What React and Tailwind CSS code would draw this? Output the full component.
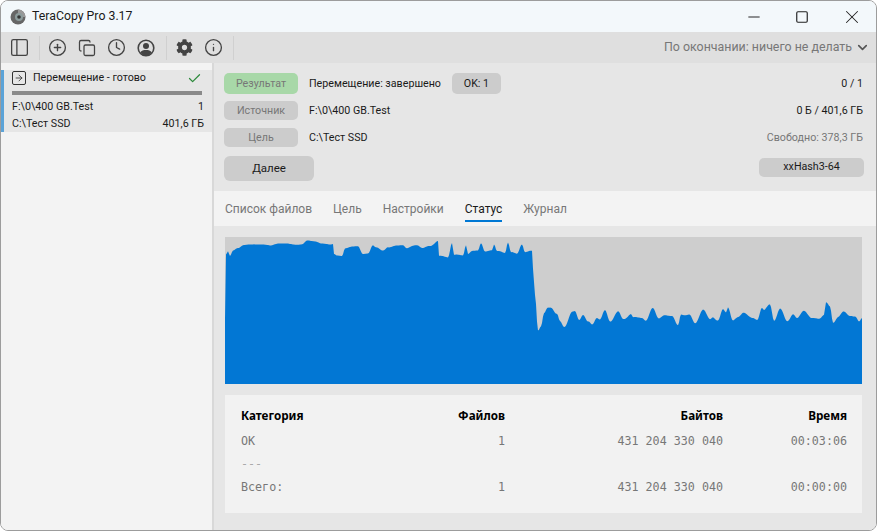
import { CirclePlus, Copy, Clock, Info, Check, ChevronDown, PanelLeft, Minus, Square, X, ArrowRight } from "lucide-react";
import { FaCog } from "react-icons/fa";

// traced from the speed graph
const tracePoints = [
  [225,319],[226,254],[228,251],[230,256],[233,251],[238,248],[243,245],[249,245],[255,244],[263,245],[270,245],[278,244],[285,243],[295,245],[302,244],[307,241],[315,241],[322,244],[333,244],[334,254],[337,256],[342,256],[345,248],[352,247],[358,246],[363,254],[368,254],[373,245],[376,247],[383,251],[388,247],[396,246],[403,245],[407,248],[417,245],[423,248],[430,246],[438,241],[439,256],[448,257],[452,243],[454,255],[463,255],[466,245],[468,254],[473,251],[478,250],[481,243],[485,252],[492,250],[494,244],[497,251],[505,253],[508,242],[511,252],[517,254],[522,244],[525,252],[532,251],[533,269],[535,295],[538,330],[541,326],[544,314],[548,308],[551,307],[557,314],[560,322],[564,327],[572,312],[575,312],[579,320],[583,314],[588,322],[592,325],[597,317],[600,319],[605,311],[610,321],[618,312],[623,319],[631,314],[633,318],[642,317],[646,321],[653,308],[659,318],[665,316],[672,315],[678,326],[681,315],[689,314],[695,324],[703,309],[710,320],[713,317],[718,320],[723,310],[726,313],[728,307],[733,320],[738,318],[744,312],[753,319],[757,320],[762,307],[764,310],[770,305],[774,320],[780,309],[787,321],[793,314],[797,319],[804,310],[812,319],[819,318],[824,315],[826,303],[830,307],[833,322],[838,317],[844,312],[850,315],[855,317],[859,322],[862,318],
];

// rounds the peaks and adds the small per-sample wobble of the real graph
const buildChart = () => {
  const out = ["225,384"];
  tracePoints.forEach(([x, y], i) => {
    const next = tracePoints[i + 1];
    if (!next) {
      out.push(`${x},${y}`);
      return;
    }
    const steps = Math.max(1, next[0] - x);
    for (let s = 0; s < steps; s++) {
      const t = (1 - Math.cos((Math.PI * s) / steps)) / 2;
      const px = x + s;
      const wobble = px > 538 ? Math.sin(px * 12.9898) * 0.9 : Math.sin(px * 12.9898) * 0.4;
      out.push(`${px},${(y + (next[1] - y) * t + wobble).toFixed(1)}`);
    }
  });
  out.push("862,384");
  return out.join(" ");
};
const chartPoints = buildChart();

const mono = "font-['DejaVu_Sans_Mono',monospace] text-[11.7px] text-[#777]";
const cols = "grid grid-cols-[132px_132px_218px_124px] items-center";

const Tag = ({ green, children }) => (
  <div
    className={`w-[74px] pt-px rounded-[5px] flex items-center justify-center text-[#777] ${
      green ? "bg-[#a8d8a8] h-[21px]" : "bg-[#cccccc] h-[19px]"
    }`}
  >
    {children}
  </div>
);

const UserIcon = () => (
  <svg width="18" height="18" viewBox="0 0 18 18">
    <circle cx="9" cy="9" r="7.8" fill="none" stroke="#444" strokeWidth="1.6" />
    <circle cx="9" cy="7" r="3" fill="#444" />
    <path d="M3.2 13.6C4.5 11.6 6.5 11 9 11s4.5.6 5.8 2.6A7.8 7.8 0 0 1 9 16.8a7.8 7.8 0 0 1-5.8-3.2Z" fill="#444" />
  </svg>
);

const AppIcon = () => (
  <svg width="16" height="16" viewBox="0 0 16 16">
    <circle cx="8" cy="8" r="7.5" fill="#666" />
    <path d="M8 .5A7.5 7.5 0 0 1 15.5 8H8Z" fill="#999" />
    <circle cx="9" cy="8" r="4" fill="#8c9c9c" />
    <circle cx="9" cy="8" r="1.8" fill="#333" />
  </svg>
);

const Sep = () => <div className="w-px h-6 bg-[#d0d0d0]" />;

const Row = ({ cat, files, bytes, time, catClass }) => (
  <div className={`${cols} h-[23px]`}>
    <div className={catClass || mono}>{cat}</div>
    <div className={`${mono} text-right`}>{files}</div>
    <div className={`${mono} text-right`}>{bytes}</div>
    <div className={`${mono} text-right`}>{time}</div>
  </div>
);

export default function App() {
  return (
    <div className="w-[877px] h-[532px] bg-white font-['Roboto',sans-serif] text-[10.7px] text-[#1a1a1a] overflow-hidden">
      <div className="h-[531px] rounded-[8px] border border-[#9c9c9c] overflow-hidden flex flex-col">
        {/* title bar */}
        <div className="h-[31px] shrink-0 bg-[#f3f8fb] flex items-center pl-[9px] pr-[13px]">
          <AppIcon />
          <span className="ml-[6px] text-[12.3px]">TeraCopy Pro 3.17</span>
          <div className="ml-auto flex items-center gap-[32px]">
            <Minus size={18} strokeWidth={1.3} color="#222" />
            <Square size={14} strokeWidth={2} color="#222" />
            <X size={22} strokeWidth={1.1} color="#222" />
          </div>
        </div>

        {/* toolbar */}
        <div className="h-[31px] shrink-0 bg-[#dfdfdf] flex items-center pl-[8px] pr-[6px] text-[#444]">
          <PanelLeft size={21} strokeWidth={1.5} color="#444" />
          <div className="ml-[9px] mr-[8px]"><Sep /></div>
          <div className="flex items-center gap-[11px]">
            <CirclePlus size={19} strokeWidth={1.7} color="#444" />
            <Copy size={18} strokeWidth={1.7} color="#444" />
            <Clock size={19} strokeWidth={1.7} color="#444" />
            <UserIcon />
          </div>
          <div className="ml-[11px] mr-[9px]"><Sep /></div>
          <div className="flex items-center gap-[11px]">
            <FaCog size={17} color="#444" />
            <Info size={19} strokeWidth={1.7} color="#444" />
          </div>
          <div className="ml-[10px]"><Sep /></div>
          <div className="ml-auto flex items-center gap-[3px] text-[12.4px] text-[#777]">
            По окончании: ничего не делать
            <ChevronDown size={15} strokeWidth={2.6} color="#555" />
          </div>
        </div>

        <div className="flex-1 flex min-h-0">
          {/* queue */}
          <div className="w-[211px] shrink-0 bg-[#f3f3f3] pt-[6px]">
            <div className="h-[62px] bg-[#e6e6e6] border-l-[3px] border-[#5ba3d8] pl-[8px] pr-[8px] relative">
              <div className="flex items-center h-[16px] mt-[1px]">
                <div className="w-[14px] h-[14px] rounded-[2px] border border-[#333] flex items-center justify-center">
                  <ArrowRight size={10} strokeWidth={2} color="#333" />
                </div>
                <span className="ml-[7px]">Перемещение - готово</span>
                <Check size={15} strokeWidth={2} color="#2e8b3d" className="ml-auto mr-[2px]" />
              </div>
              <div className="h-[4px] bg-[#8a8a8a] mt-[5px] mr-[2px]" />
              <div className="flex justify-between mt-[5px] h-[15px] items-center"><span>F:\0\400 GB.Test</span><span>1</span></div>
              <div className="flex justify-between mt-[2px] h-[15px] items-center"><span>C:\Тест SSD</span><span>401,6 ГБ</span></div>
            </div>
          </div>

          <div className="flex-1 min-w-0 flex flex-col bg-[#e6e6e6] border-l-2 border-[#d8d8d8]">
            {/* job info */}
            <div className="h-[128px] shrink-0 pl-[10px] pr-[13px] pt-[10px]">
              <div className="flex items-center h-[21px]">
                <Tag green>Результат</Tag>
                <span className="ml-[11px] translate-y-px">Перемещение: завершено</span>
                <div className="ml-[11px] w-[49px] h-[21px] pt-px rounded-[5px] bg-[#cccccc] flex items-center justify-center">OK: 1</div>
                <span className="ml-auto translate-y-px">0 / 1</span>
              </div>
              <div className="flex items-center h-[19px] mt-[7px]">
                <Tag>Источник</Tag>
                <span className="ml-[11px] translate-y-px">F:\0\400 GB.Test</span>
                <span className="ml-auto translate-y-px">0 Б / 401,6 ГБ</span>
              </div>
              <div className="flex items-center h-[19px] mt-[8px]">
                <Tag>Цель</Tag>
                <span className="ml-[11px] translate-y-px">C:\Тест SSD</span>
                <span className="ml-auto translate-y-px text-[#777]">Свободно: 378,3 ГБ</span>
              </div>
              <div className="flex items-center justify-between mt-[9px]">
                <div className="w-[90px] h-[25px] rounded-[6px] bg-[#cccccc] flex items-center justify-center text-[11.5px]">Далее</div>
                <div className="w-[105px] h-[19px] -mr-px mb-[2px] rounded-[5px] bg-[#cccccc] flex items-center justify-center">xxHash3-64</div>
              </div>
            </div>

            {/* tabs */}
            <div className="h-[35px] shrink-0 bg-[#f3f3f3] flex items-center gap-[21px] pl-[11px] text-[12px] text-[#777]">
              <span>Список файлов</span>
              <span>Цель</span>
              <span>Настройки</span>
              <span className="relative text-[#1a1a1a]">
                Статус
                <span className="absolute left-0 right-0 -bottom-[4px] h-[2px] bg-[#0078d4]" />
              </span>
              <span>Журнал</span>
            </div>

            {/* speed graph */}
            <div className="px-[11px] pt-[11px]">
              <svg className="block w-[637px] h-[147px] bg-[#cecece]" viewBox="225 237 637 147" preserveAspectRatio="none">
                <polygon points={chartPoints} fill="#0277d4" />
              </svg>
            </div>

            {/* totals */}
            <div className="mx-[11px] mt-[11px] w-[637px] h-[118px] bg-[#f2f2f2] pl-[16px] pt-[9px] font-['Noto_Sans',sans-serif]">
              <div className={`${cols} h-[23px] mb-[3px] font-bold text-[11.7px] text-black`}>
                <div>Категория</div>
                <div className="text-right">Файлов</div>
                <div className="text-right">Байтов</div>
                <div className="text-right">Время</div>
              </div>
              <Row cat="OK" files="1" bytes="431 204 330 040" time="00:03:06" />
              <Row cat="---" catClass="font-['DejaVu_Sans_Mono',monospace] text-[11.7px] text-[#aaa]" />
              <Row cat="Всего:" files="1" bytes="431 204 330 040" time="00:00:00" />
            </div>
          </div>
        </div>
      </div>
    </div>
  );
}
